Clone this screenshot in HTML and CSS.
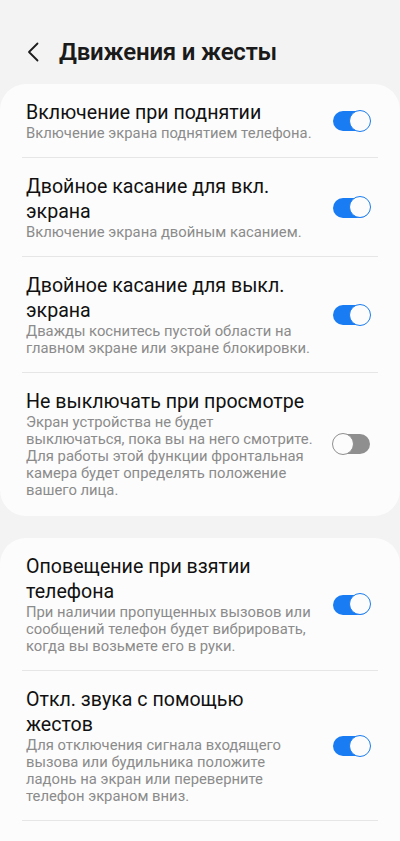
FILE: index.html
```html
<!DOCTYPE html>
<html>
  <head>
    <title>Движения и жесты</title>
    <link rel="stylesheet" href="styles.css">
  </head>
  <body>
    <header class="top-bar">
      <svg class="back" width="12" height="20" viewBox="0 0 12 20">
        <path d="M10.5 1.5 L2 10 L10.5 18.5" fill="none" stroke="#1c1c1c" stroke-width="1.8" stroke-linecap="round" stroke-linejoin="round" />
      </svg>
      <h1>Движения и жесты</h1>
    </header>

    <section class="card">
      <div class="row">
        <div class="text">
          <div class="title">Включение при поднятии</div>
          <div class="sub">Включение экрана поднятием телефона.</div>
        </div>
        <span class="switch on"></span>
      </div>
      <div class="row">
        <div class="text">
          <div class="title">Двойное касание для вкл. экрана</div>
          <div class="sub">Включение экрана двойным касанием.</div>
        </div>
        <span class="switch on"></span>
      </div>
      <div class="row">
        <div class="text">
          <div class="title">Двойное касание для выкл. экрана</div>
          <div class="sub">Дважды коснитесь пустой области на главном экране или экране блокировки.</div>
        </div>
        <span class="switch on"></span>
      </div>
      <div class="row last">
        <div class="text">
          <div class="title">Не выключать при просмотре</div>
          <div class="sub">Экран устройства не будет выключаться, пока вы на него смотрите. Для работы этой функции фронтальная камера будет определять положение вашего лица.</div>
        </div>
        <span class="switch"></span>
      </div>
    </section>

    <section class="card more">
      <div class="row">
        <div class="text">
          <div class="title">Оповещение при взятии телефона</div>
          <div class="sub">При наличии пропущенных вызовов или сообщений телефон будет вибрировать, когда вы возьмете его в руки.</div>
        </div>
        <span class="switch on"></span>
      </div>
      <div class="row">
        <div class="text">
          <div class="title">Откл. звука с помощью жестов</div>
          <div class="sub">Для отключения сигнала входящего вызова или будильника положите ладонь на экран или переверните телефон экраном вниз.</div>
        </div>
        <span class="switch on"></span>
      </div>
    </section>
  </body>
</html>
```

FILE: styles.css
```css
body {
  margin: 0;
  background-color: #f3f3f3;
  font-family: Roboto, "Noto Sans", sans-serif;
  color: #111;
}

.top-bar {
  display: flex;
  align-items: center;
  height: 84px;
  padding: 20px 0 0 27px;
  box-sizing: border-box;
}

.back {
  margin-right: 20px;
}

h1 {
  margin: 0;
  font-size: 24px;
  font-weight: 600;
  letter-spacing: -0.2px;
  color: #1a1a1a;
}

.card {
  background-color: #fcfcfc;
  border-radius: 26px;
  padding: 0 22px;
  margin-bottom: 22px;
}

/* list continues below the fold */
.card.more {
  padding-bottom: 60px;
}

.row {
  display: flex;
  align-items: center;
  padding: 16px 0 15px 4px;
  border-bottom: 1px solid #e6e6e6;
}

.row.last {
  border-bottom: none;
  padding-bottom: 17px;
}

.text {
  flex: 1;
  padding-right: 19px;
}

.title {
  font-size: 19.6px;
  line-height: 25px;
  color: #111;
}

.sub {
  font-size: 14.8px;
  line-height: 17px;
  color: #8b8b8b;
}

.switch {
  position: relative;
  flex: none;
  width: 37px;
  height: 20px;
  border-radius: 10px;
  background-color: #8f8f8f;
  margin-right: 8px;
}

.switch::after {
  content: "";
  position: absolute;
  top: -1.5px;
  left: -1px;
  width: 20px;
  height: 20px;
  border-radius: 50%;
  background-color: #fcfcfc;
  border: 1.5px solid #8f8f8f;
}

.switch.on {
  background-color: #1a7cf3;
}

.switch.on::after {
  left: auto;
  right: -1px;
  border-color: #1a7cf3;
}
```
